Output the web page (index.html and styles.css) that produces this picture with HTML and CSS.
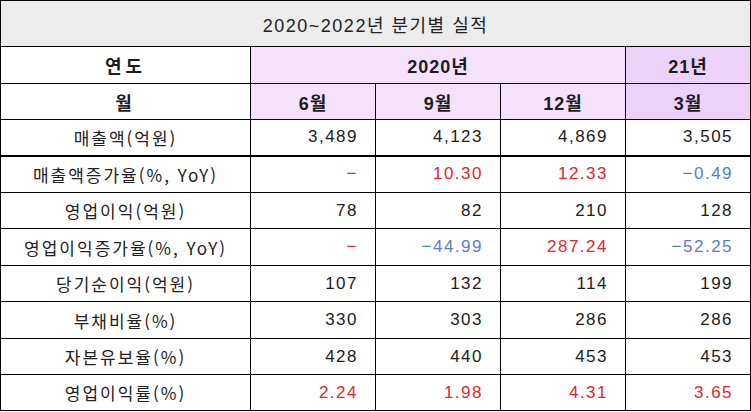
FILE: index.html
```html
<!DOCTYPE html>
<html lang="ko">
<head>
<meta charset="utf-8">
<title>2020~2022년 분기별 실적</title>
<link rel="stylesheet" href="styles.css">
</head>
<body>
<table class="perf">
  <colgroup>
    <col class="c-label">
    <col class="c-q">
    <col class="c-q">
    <col class="c-q">
    <col class="c-q">
  </colgroup>
  <thead>
    <tr class="r-title">
      <th colspan="5" class="title">2020~2022년 분기별 실적</th>
    </tr>
    <tr class="r-head">
      <th class="h-label">연도</th>
      <th colspan="3" class="h-y20">2020년</th>
      <th class="h-y21">21년</th>
    </tr>
    <tr class="r-head2">
      <th class="h-label">월</th>
      <th class="h-y20">6월</th>
      <th class="h-y20">9월</th>
      <th class="h-y20">12월</th>
      <th class="h-y21">3월</th>
    </tr>
  </thead>
  <tbody>
    <tr class="r-a thick">
      <td class="lbl">매출액(억원)</td>
      <td class="num">3,489</td><td class="num">4,123</td><td class="num">4,869</td><td class="num">3,505</td>
    </tr>
    <tr class="r-b">
      <td class="lbl">매출액증가율(%, YoY)</td>
      <td class="num red">−</td><td class="num red">10.30</td><td class="num red">12.33</td><td class="num blue">−0.49</td>
    </tr>
    <tr class="r-a">
      <td class="lbl">영업이익(억원)</td>
      <td class="num">78</td><td class="num">82</td><td class="num">210</td><td class="num">128</td>
    </tr>
    <tr class="r-b">
      <td class="lbl">영업이익증가율(%, YoY)</td>
      <td class="num red">−</td><td class="num blue">−44.99</td><td class="num red">287.24</td><td class="num blue">−52.25</td>
    </tr>
    <tr class="r-a">
      <td class="lbl">당기순이익(억원)</td>
      <td class="num">107</td><td class="num">132</td><td class="num">114</td><td class="num">199</td>
    </tr>
    <tr class="r-b">
      <td class="lbl">부채비율(%)</td>
      <td class="num">330</td><td class="num">303</td><td class="num">286</td><td class="num">286</td>
    </tr>
    <tr class="r-a">
      <td class="lbl">자본유보율(%)</td>
      <td class="num">428</td><td class="num">440</td><td class="num">453</td><td class="num">453</td>
    </tr>
    <tr class="r-a">
      <td class="lbl">영업이익률(%)</td>
      <td class="num red">2.24</td><td class="num red">1.98</td><td class="num red">4.31</td><td class="num red">3.65</td>
    </tr>
  </tbody>
</table>
</body>
</html>
```

FILE: styles.css
```css
html, body {
  margin: 0;
  padding: 0;
  background: #ffffff;
}

.perf {
  border-collapse: collapse;
  table-layout: fixed;
  width: 750px;
  color: #1c1c1c;
  font-family: "Liberation Sans", "Noto Sans CJK KR", sans-serif;
}

.c-label { width: 250px; }
.c-q { width: 125px; }

.perf th,
.perf td {
  border: 1px solid #000000;
  padding: 0;
  vertical-align: middle;
  overflow: hidden;
  white-space: nowrap;
}

.r-title { height: 46px; }
.r-head { height: 37px; }
.r-head2 { height: 36px; }
.r-a { height: 36px; }
.r-b { height: 37px; }

.title {
  background: #ececec;
  font-weight: normal;
  font-size: 18px;
  letter-spacing: 1.5px;
  text-align: center;
  color: #222222;
}

.h-label,
.h-y20,
.h-y21 {
  font-size: 18px;
  font-weight: bold;
  letter-spacing: 1px;
  text-align: center;
}

.h-label {
  background: #ffffff;
  letter-spacing: 4px;
}

.h-y20 { background: #f4e2fc; }
.h-y21 { background: #ecd1f9; }

.lbl {
  text-align: center;
  font-family: "Noto Sans CJK KR", sans-serif;
  font-size: 17px;
  letter-spacing: 2px;
  color: #222222;
}

.num {
  text-align: right;
  padding-right: 17px !important;
  font-size: 17px;
  letter-spacing: 1.5px;
  color: #1c1c1c;
}

.red { color: #e3262e; }
.blue { color: #5a7ec6; }

.thick td {
  border-bottom: 2px solid #000000;
}
```
